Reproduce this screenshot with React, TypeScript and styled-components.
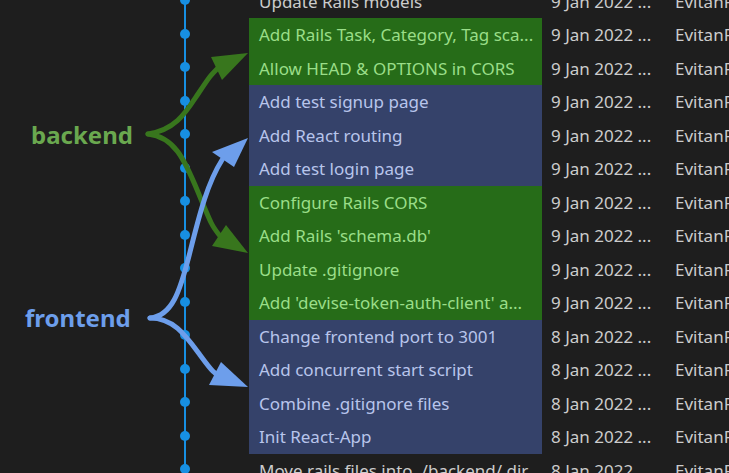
import React from "react";
import styled, { createGlobalStyle } from "styled-components";

type Tone = "plain" | "backend" | "frontend";

const commits: { message: string; date: string; tone: Tone }[] = [
  { message: "Update Rails models", date: "9 Jan 2022 ...", tone: "plain" },
  { message: "Add Rails Task, Category, Tag sca...", date: "9 Jan 2022 ...", tone: "backend" },
  { message: "Allow HEAD & OPTIONS in CORS", date: "9 Jan 2022 ...", tone: "backend" },
  { message: "Add test signup page", date: "9 Jan 2022 ...", tone: "frontend" },
  { message: "Add React routing", date: "9 Jan 2022 ...", tone: "frontend" },
  { message: "Add test login page", date: "9 Jan 2022 ...", tone: "frontend" },
  { message: "Configure Rails CORS", date: "9 Jan 2022 ...", tone: "backend" },
  { message: "Add Rails 'schema.db'", date: "9 Jan 2022 ...", tone: "backend" },
  { message: "Update .gitignore", date: "9 Jan 2022 ...", tone: "backend" },
  { message: "Add 'devise-token-auth-client' a...", date: "9 Jan 2022 ...", tone: "backend" },
  { message: "Change frontend port to 3001", date: "8 Jan 2022 ...", tone: "frontend" },
  { message: "Add concurrent start script", date: "8 Jan 2022 ...", tone: "frontend" },
  { message: "Combine .gitignore files", date: "8 Jan 2022 ...", tone: "frontend" },
  { message: "Init React-App", date: "8 Jan 2022 ...", tone: "frontend" },
  { message: "Move rails files into ./backend/ dir", date: "8 Jan 2022 ...", tone: "plain" },
];

const toneBg: Record<Tone, string> = {
  plain: "transparent",
  backend: "#266c18",
  frontend: "#35426a",
};

const toneText: Record<Tone, string> = {
  plain: "#cccccc",
  backend: "#9ade88",
  frontend: "#b8c5ec",
};

const GlobalStyle = createGlobalStyle`
  html, body {
    margin: 0;
    padding: 0;
    background: #1e1e1e;
  }
  body {
    font-family: "Noto Sans", "Open Sans", sans-serif;
  }
`;

export default function App() {
  return (
    <>
      <GlobalStyle />
      <Page>
        <CommitList>
          {commits.map((c, i) => (
            <CommitRow key={i}>
              <GraphCell />
              <Message $tone={c.tone}>{c.message}</Message>
              <DateCell>{c.date}</DateCell>
              <Author>EvitanRelta</Author>
            </CommitRow>
          ))}
        </CommitList>

        <Annotations>
          <Label $color="#6aa84f" style={{ left: 31, top: 118 }}>
            backend
          </Label>
          <Label $color="#6d9eeb" style={{ left: 25, top: 301 }}>
            frontend
          </Label>
          <svg width="729" height="473" viewBox="0 0 729 473">
            <g fill="none" strokeWidth="5" strokeLinecap="round">
              <path stroke="#38761d" d="M148,134 C176,130 186,112 198,94 S210,76 218,68" />
              <path stroke="#38761d" d="M148,134 C174,137 184,158 198,192 S212,226 220,236" />
              <path stroke="#6d9eeb" d="M150,318 C172,316 180,292 190,252 S208,182 222,160" />
              <path stroke="#6d9eeb" d="M150,318 C174,318 186,336 200,355 S210,368 216,374" />
            </g>
            <polygon fill="#38761d" points="248,53 211,57 222,80" />
            <polygon fill="#38761d" points="248,253 212,246 226,225" />
            <polygon fill="#6d9eeb" points="248,138 212,152 234,167" />
            <polygon fill="#6d9eeb" points="248,387 209,385 221,362" />
          </svg>
        </Annotations>
      </Page>
    </>
  );
}

const Page = styled.div`
  position: relative;
  width: 729px;
  height: 473px;
  overflow: hidden;
  background: #1e1e1e;
`;

const CommitList = styled.div`
  display: flex;
  flex-direction: column;
  margin-top: -15.5px;
`;

const CommitRow = styled.div`
  display: grid;
  grid-template-columns: 249px 293px 133px 1fr;
  height: 33.5px;
  font-size: 17px;
  white-space: nowrap;
`;

const GraphCell = styled.div`
  position: relative;

  &::before {
    content: "";
    position: absolute;
    left: 184px;
    top: 0;
    bottom: 0;
    width: 2px;
    background: #178fe2;
  }

  &::after {
    content: "";
    position: absolute;
    left: 180px;
    top: 50%;
    width: 10px;
    height: 10px;
    margin-top: -6px;
    border-radius: 50%;
    background: #178fe2;
  }
`;

const Message = styled.div<{ $tone: Tone }>`
  display: flex;
  align-items: center;
  padding-left: 10px;
  overflow: hidden;
  background: ${(p) => toneBg[p.$tone]};
  color: ${(p) => toneText[p.$tone]};
`;

const DateCell = styled.div`
  display: flex;
  align-items: center;
  padding-left: 9px;
  color: #cccccc;
`;

const Author = styled.div`
  display: flex;
  align-items: center;
  overflow: hidden;
  color: #cccccc;
`;

const Annotations = styled.div`
  position: absolute;
  inset: 0;
  pointer-events: none;

  svg {
    position: absolute;
    left: 0;
    top: 0;
  }
`;

const Label = styled.div<{ $color: string }>`
  position: absolute;
  font-size: 24px;
  font-weight: 700;
  line-height: 34px;
  color: ${(p) => p.$color};
`;
